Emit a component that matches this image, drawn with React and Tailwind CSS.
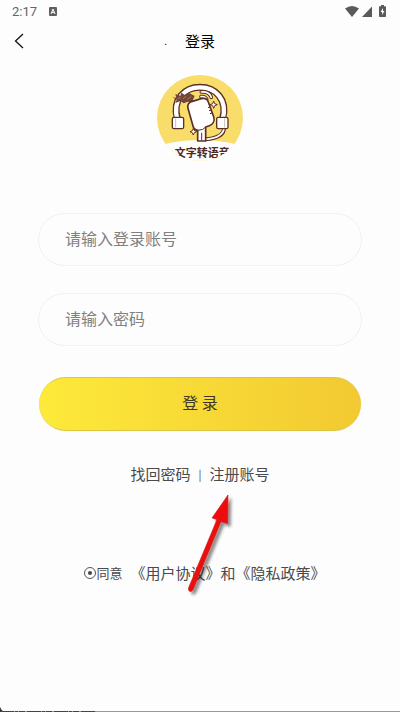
import React, { useState } from 'react';

const Logo = () => (
  <svg viewBox="21 15 258 258" className="w-[86px] h-[86px]" role="img" aria-label="文字转语音">
    <defs>
      <clipPath id="logo-circle">
        <circle cx="150" cy="144" r="129" />
      </clipPath>
    </defs>
    <g clipPath="url(#logo-circle)">
      <rect x="21" y="15" width="258" height="258" fill="#f9dd6a" />
      <path d="M21 230C60 216 100 211 150 211S240 216 279 230V280H21Z" fill="#fefefe" />

      {/* Headband */}
      <path
        d="M82 146C66 88 104 52 150 52S234 88 218 146"
        fill="none"
        stroke="#5d3026"
        strokeWidth="21"
      />
      <path
        d="M82 148C66 88 104 52 150 52S234 88 218 148"
        fill="none"
        stroke="#fff"
        strokeWidth="13"
      />

      {/* Cable */}
      <path d="M222 172C223 193 203 205 166 208" fill="none" stroke="#5d3026" strokeWidth="12" />
      <path d="M222 170C223 193 203 205 164 208" fill="none" stroke="#fff" strokeWidth="5" />

      {/* Ear cups */}
      <g fill="#fff" stroke="#5d3026" strokeWidth="4">
        <rect x="67" y="142" width="34" height="34" rx="5" />
        <rect x="200" y="142" width="34" height="34" rx="5" />
      </g>
      <path d="M77 145V173M224 145V173" stroke="#b39a94" strokeWidth="2" />

      {/* Ribbon */}
      <path
        d="M67 82L79 84L76 72L91 77L94 68L105 75L118 69L134 78L129 89L134 98L113 95L101 100L92 93L76 99L80 89Z"
        fill="#714639"
      />
      <path d="M83 86L92 82M98 87L109 79M112 88L124 79" stroke="#c69a5a" strokeWidth="2" />

      {/* Sound waves */}
      <g fill="none" stroke="#5d3026" strokeWidth="11" strokeLinecap="round">
        <path d="M154 66Q177 64 184 82" />
        <path d="M153 80Q165 78 170 88" />
      </g>
      <g fill="none" stroke="#fff" strokeWidth="5" strokeLinecap="round">
        <path d="M154 66Q177 64 184 82" />
        <path d="M153 80Q165 78 170 88" />
      </g>

      {/* Microphone */}
      <path
        d="M114 115C111 103 118 97 127 94L154 86C165 83 172 87 175 96L191 140C195 153 188 163 178 167L167 171V213H143V181C136 180 131 176 129 168Z"
        fill="#fff"
        stroke="#5d3026"
        strokeWidth="5"
        strokeLinejoin="round"
      />
      <path d="M143 181Q160 181 167 171M155 188V211" fill="none" stroke="#5d3026" strokeWidth="3" />
      <path d="M174 113L181 111M177 122L184 120M180 131L187 129" stroke="#5d3026" strokeWidth="3" />

      {/* Sparkles */}
      <g fill="#fff" stroke="#5d3026" strokeWidth="3" strokeLinejoin="round">
        <path d="M191 93L194 101L202 104L194 107L191 115L188 107L180 104L188 101Z" />
        <path d="M130 175L133 182L140 185L133 188L130 195L127 188L120 185L127 182Z" />
      </g>

      <text
        x="74"
        y="260"
        fontSize="33"
        fontWeight="700"
        fill="#4f2925"
        fontFamily="'Noto Sans CJK SC', sans-serif"
      >
        文字转语音
      </text>
    </g>
  </svg>
);

const StatusBar = () => (
  <div className="flex items-center justify-between h-[22px] pl-3 pr-3.5 text-[#666]">
    <div className="flex items-center gap-3">
      <span className="font-[Roboto,sans-serif] text-[13px] leading-none">2:17</span>
      <svg viewBox="0 0 8 9" className="w-2 h-[9px]" aria-hidden="true">
        <rect width="8" height="9" rx="1" fill="#5f5f5f" />
        <path d="M2 7L4 2L6 7M2.8 5.4H5.2" fill="none" stroke="#fff" strokeWidth="1" />
      </svg>
    </div>
    <div className="flex items-center gap-[3px]">
      <svg viewBox="0 0 14 11" className="w-3.5 h-[11px]" aria-hidden="true">
        <path d="M0 2.6Q7-2.4 14 2.6L7 11Z" fill="#5a5a5a" />
      </svg>
      <svg viewBox="0 0 10 11" className="w-2.5 h-[11px]" aria-hidden="true">
        <path d="M10 0.5V11H0Z" fill="#5a5a5a" />
      </svg>
      <svg viewBox="0 0 7 12" className="w-[7px] h-3 ml-1" aria-hidden="true">
        <path d="M2 0H5V1.2H6.2Q7 1.2 7 2V11.2Q7 12 6.2 12H0.8Q0 12 0 11.2V2Q0 1.2 0.8 1.2H2Z" fill="#5a5a5a" />
        <path d="M4 3L1.6 7H3.2V10L5.5 6H4Z" fill="#fff" />
      </svg>
    </div>
  </div>
);

const Arrow = () => (
  <svg
    viewBox="0 0 56 108"
    className="absolute left-1/2 top-[490px] w-14 h-[108px] -ml-4 pointer-events-none"
    aria-hidden="true"
  >
    <defs>
      <filter id="arrow-shadow" x="-30%" y="-10%" width="170%" height="130%">
        <feDropShadow dx="3" dy="3" stdDeviation="1.6" floodColor="#000" floodOpacity="0.45" />
      </filter>
    </defs>
    <path
      d="M44 5L28 28L33 29.500L4.5 98Q4 101 6 101.500Q8 102 9 99.500L37 31.500L43.500 33.500Z"
      fill="#ee0b0d"
      stroke="#c91416"
      strokeWidth="0.6"
      filter="url(#arrow-shadow)"
    />
  </svg>
);

const fieldClass =
  'block w-full h-[53px] rounded-full border border-[#f1f1f1] bg-transparent px-[26px] pb-[3px] text-base text-[#444] placeholder:text-[#808080] outline-none focus:border-[#f9e135]';

const App = () => {
  const [account, setAccount] = useState('');
  const [password, setPassword] = useState('');

  const handleSubmit = (e) => {
    e.preventDefault();
  };

  return (
    <div className="relative flex flex-col min-h-screen bg-[#fdfdfd] font-['Noto_Sans_CJK_SC',sans-serif] text-[#4a4a4a]">
      <StatusBar />

      <header className="grid grid-cols-[1fr_auto_1fr] items-center h-[38px] px-3.5 text-black">
        <div className="flex items-center justify-between">
          <button type="button" aria-label="返回">
            <svg viewBox="0 0 10 16" className="w-2.5 h-4" aria-hidden="true">
              <path d="M9 1L1.500 8L9 15" fill="none" stroke="#111" strokeWidth="1.300" />
            </svg>
          </button>
          <span className="mr-[18px] text-[10px] leading-none">.</span>
        </div>
        <h1 className="text-[15px] leading-5">登录</h1>
      </header>

      <main className="flex flex-col items-center px-[38px] pt-[15px]">
        <Logo />

        <form onSubmit={handleSubmit} className="w-full mt-[52px]">
          <input
            type="text"
            aria-label="登录账号"
            placeholder="请输入登录账号"
            value={account}
            onChange={(e) => setAccount(e.target.value)}
            className={fieldClass}
          />
          <input
            type="password"
            aria-label="密码"
            placeholder="请输入密码"
            value={password}
            onChange={(e) => setPassword(e.target.value)}
            className={`${fieldClass} mt-[27px]`}
          />
          <div className="px-px mt-[31px]">
            <button
              type="submit"
              className="block w-full h-[54px] pb-1 rounded-full border-y border-[#dcc540] bg-linear-to-r from-[#fdea3a] to-[#f2c932] text-base text-[#3f3920]"
            >
              登 录
            </button>
          </div>
        </form>

        <nav className="flex items-center gap-2 mt-[31px] text-[15px] leading-6">
          <a href="#forgot">找回密码</a>
          <span className="text-[11px]">|</span>
          <a href="#register">注册账号</a>
        </nav>

        <div className="flex items-center mt-[75px] pl-2.5 text-[15px] leading-6">
          <label className="flex items-center text-[13px]">
            <input
              type="radio"
              name="agree"
              defaultChecked
              className="grid place-content-center appearance-none size-3 rounded-full border border-[#555] checked:before:size-1 checked:before:rounded-full checked:before:bg-[#444]"
            />
            同意
          </label>
          <span className="ml-2">
            <a href="#terms">《用户协议》</a>和<a href="#privacy">《隐私政策》</a>
          </span>
        </div>
      </main>

      <Arrow />

      <div className="flex items-end mt-auto">
        <svg viewBox="0 0 96 5" className="w-24 h-[5px]" aria-hidden="true">
          <path d="M0 0Q1 3 4 5H0Z" fill="#333" />
          <path d="M0 4.500H96" stroke="#999" strokeWidth="1" />
          <path d="M0 4.500H96" stroke="#444" strokeWidth="1" strokeDasharray="14 1 3 1 6 2" />
        </svg>
        <div className="flex-1 h-px bg-[#999]" />
      </div>
    </div>
  );
};

export default App;
